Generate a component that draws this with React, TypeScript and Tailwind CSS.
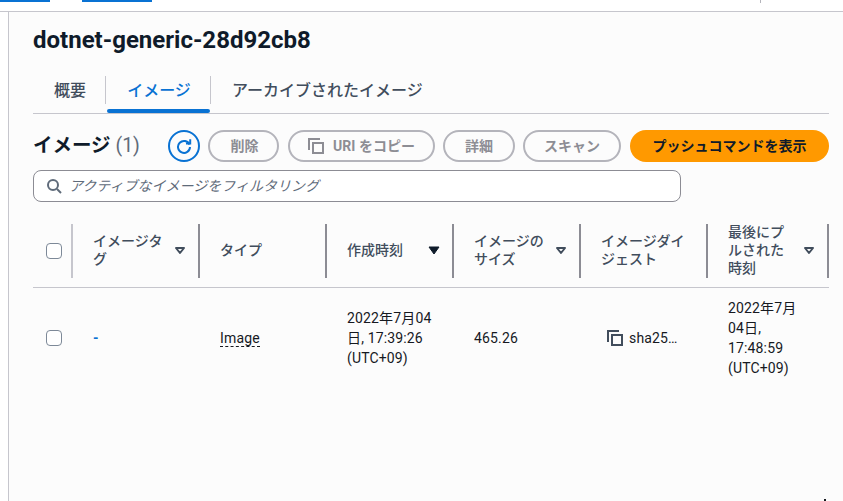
const font = { fontFamily: 'Roboto, "Noto Sans CJK JP", sans-serif' };

function CopyIcon({ className }: { className?: string }) {
  return (
    <svg viewBox="0 0 16 16" fill="none" stroke="currentColor" strokeWidth="2" className={className}>
      <path d="M1 12V1h11" />
      <rect x="5" y="5" width="10" height="10" />
    </svg>
  );
}

function Caret({ filled }: { filled?: boolean }) {
  return (
    <svg viewBox="0 0 12 9" className="h-[9px] w-3 shrink-0 text-[#414d5c]">
      {filled ? (
        <path d="M1 1h10L6 8z" fill="#0f1b2a" stroke="#0f1b2a" strokeWidth="1" strokeLinejoin="round" />
      ) : (
        <path d="M2 2h8L6 7z" fill="none" stroke="currentColor" strokeWidth="2" strokeLinejoin="round" />
      )}
    </svg>
  );
}

function Checkbox() {
  return <span className="block h-4 w-4 rounded-[4px] border border-[#7d8998] bg-white" />;
}

function OutlineButton({ children, className }: { children: React.ReactNode; className?: string }) {
  return (
    <button
      type="button"
      className={`flex h-8 items-center justify-center gap-[9px] rounded-full border-2 border-[#b4b4bb] text-[14px] font-bold text-[#8d8d94] ${className ?? ""}`}
    >
      {children}
    </button>
  );
}

const headers = [
  { label: "イメージタグ", caret: "ml-[9px]", width: "w-[72px]" },
  { label: "タイプ", width: "w-[72px]" },
  { label: "作成時刻", caret: "ml-[9px]", filled: true, width: "w-[72px]" },
  { label: "イメージのサイズ", caret: "ml-[9px]", width: "w-[72px]" },
  { label: "イメージダイジェスト", width: "w-[86px]" },
  { label: "最後にプルされた時刻", caret: "ml-[17px]", width: "w-[58px]" },
];

export default function App() {
  return (
    <div className="relative flex h-[501px] w-[843px] flex-col overflow-hidden bg-white" style={font}>
      <div className="relative flex h-3 shrink-0 border-b border-[#c6c6cd] bg-white">
        <span className="ml-0 h-[2px] w-[50px] bg-[#0972d3]" />
        <span className="ml-8 h-[2px] w-[70px] bg-[#0972d3]" />
        <span className="ml-[608px] h-[3px] w-px bg-[#b4b4bb]" />
      </div>

      <div className="flex min-h-0 flex-1">
        <div className="w-2 shrink-0 bg-white" />
        <main className="flex-1 border-l border-[#c6c6cd] bg-[#fcfcfc] pl-6 pr-[14px]">
          <h1 className="mt-[13px] text-[24px] leading-[30px] font-bold text-[#0f1b2a]">dotnet-generic-28d92cb8</h1>

          <nav className="mt-[21px] flex h-[38px] border-b border-[#c6c6cd] text-[16px] font-medium text-[#414d5c]">
            <div className="flex h-7 w-[73px] items-center justify-center border-r border-[#c6c6cd] pt-[2px] pl-[2px]">概要</div>
            <div className="relative flex h-7 w-[105px] items-center justify-center border-r border-[#c6c6cd] pt-[2px] pl-[2px] text-[#0972d3]">
              イメージ
              <span className="absolute -bottom-[9px] left-[1px] right-0 h-1 rounded-full bg-[#0972d3]" />
            </div>
            <div className="flex h-7 items-center pt-[2px] pl-[21px]">アーカイブされたイメージ</div>
          </nav>

          <div className="mt-4 flex items-center">
            <div className="w-[135px] text-[19.5px] leading-8 font-bold text-[#0f1b2a]">
              イメージ <span className="font-normal text-[#5f6b7a]">(1)</span>
            </div>
            <button type="button" className="flex h-8 w-8 items-center justify-center rounded-full border-2 border-[#0972d3] text-[#0972d3]">
              <svg viewBox="0 0 16 16" fill="none" stroke="currentColor" strokeWidth="2" className="h-4 w-4">
                <path d="M13.5 6.5A6 6 0 1 0 14 9" />
                <path d="M10 5.5h4.2V1.3" />
              </svg>
            </button>
            <OutlineButton className="ml-2 w-[71px] pl-[2px]">削除</OutlineButton>
            <OutlineButton className="ml-[9px] w-[147px]">
              <CopyIcon className="h-4 w-4" />
              URI をコピー
            </OutlineButton>
            <OutlineButton className="ml-2 w-[72px]">詳細</OutlineButton>
            <OutlineButton className="ml-2 w-[98px]">スキャン</OutlineButton>
            <button type="button" className="ml-[9px] flex h-8 w-[199px] items-center justify-center rounded-full bg-[#ff9900] text-[14px] font-bold text-[#0f1b2a]">
              プッシュコマンドを表示
            </button>
          </div>

          <div className="mt-2 flex h-8 w-[648px] items-center rounded-lg border border-[#8c8c94] bg-white pl-3">
            <svg viewBox="0 0 16 16" fill="none" stroke="#5f6b7a" strokeWidth="2" className="h-4 w-4">
              <circle cx="7" cy="7" r="5" />
              <path d="M11 11l4 4" />
            </svg>
            <span className="ml-[7px] text-[14px] text-[#5f6b7a] italic">アクティブなイメージをフィルタリング</span>
          </div>

          <div className="mt-[22px] grid grid-cols-[40px_127px_127px_127px_127px_127px_121px]">
            <div className="flex h-[54px] items-center border-r-2 border-[#c6c6cd] pl-[13px]">
              <Checkbox />
            </div>
            {headers.map((h) => (
              <div key={h.label} className="flex h-[54px] items-center border-r-2 border-[#8c8c94] pb-[2px] pl-[20px] text-[14px] leading-[18px] font-medium text-[#414d5c]">
                <span className={h.width}>{h.label}</span>
                {h.caret && (
                  <span className={h.caret}>
                    <Caret filled={h.filled} />
                  </span>
                )}
              </div>
            ))}
          </div>

          <div className="mt-[9px] grid h-[100px] grid-cols-[40px_127px_127px_127px_127px_127px_121px] items-center border-t border-[#c6c6cd] text-[14px] leading-5 tracking-[0.15px] text-[#16191f]">
            <div className="pl-[13px]">
              <Checkbox />
            </div>
            <div className="pl-[20px] font-bold text-[#0972d3]">-</div>
            <div className="pl-[20px]">
              <span className="border-b border-dashed border-[#16191f]">Image</span>
            </div>
            <div className="pl-[20px]">
              2022年7月04
              <br />
              日, 17:39:26
              <br />
              (UTC+09)
            </div>
            <div className="pl-[20px]">465.26</div>
            <div className="flex items-center pl-[26px]">
              <CopyIcon className="h-4 w-4 text-[#414d5c]" />
              <span className="ml-[6px]">sha25…</span>
            </div>
            <div className="pl-[20px]">
              2022年7月
              <br />
              04日,
              <br />
              17:48:59
              <br />
              (UTC+09)
            </div>
          </div>
        </main>
      </div>
      <span className="absolute right-[17px] bottom-0 h-[2px] w-[2px] bg-[#16191f]" />
    </div>
  );
}
